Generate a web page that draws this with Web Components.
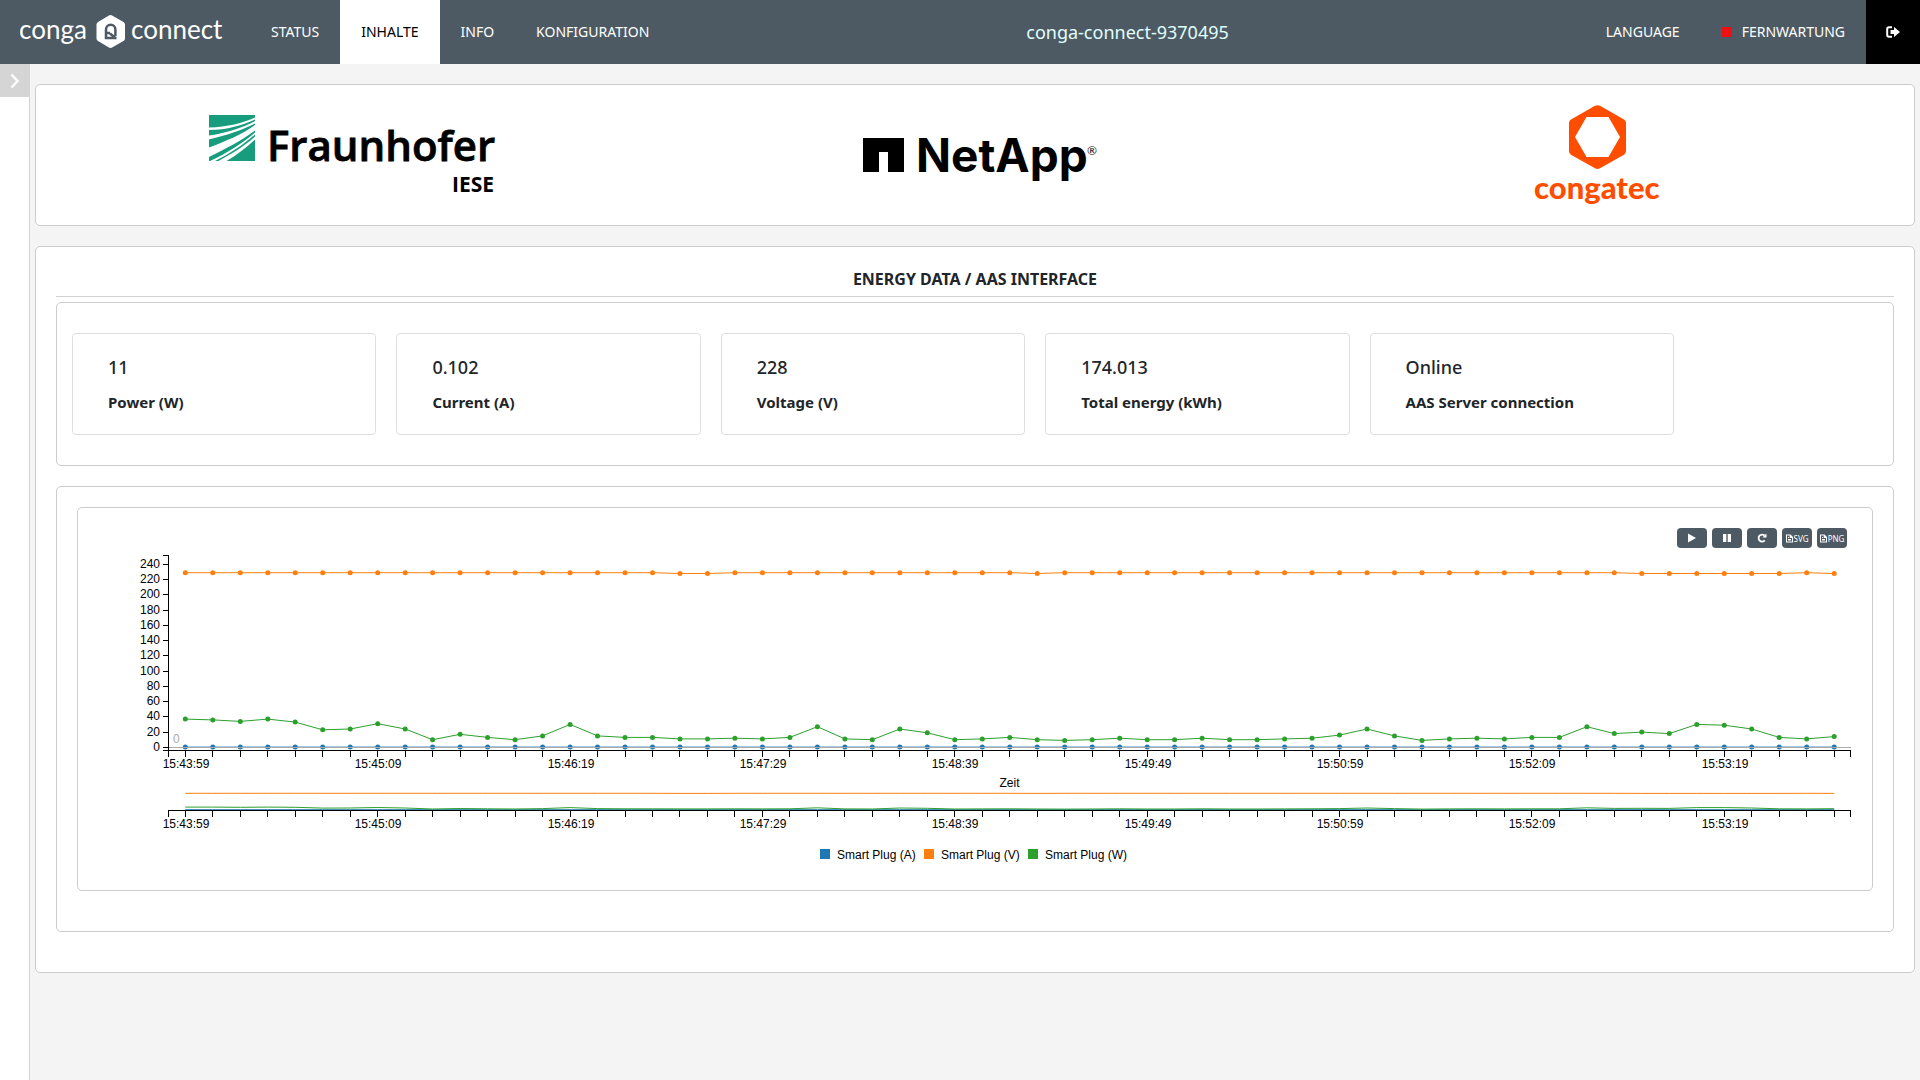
<!DOCTYPE html>
<html lang="de">
<head>
<meta charset="utf-8">
<title>conga-connect</title>
<style>
  html, body { height: 100%; }
  body { margin: 0; background: #f4f4f4; color: #212529; font-family: "Noto Sans", "Open Sans", sans-serif; font-size: 15px; }
</style>
</head>
<body>
<cc-app>
  <cc-header slot="header" device="conga-connect-9370495">
    <cc-nav-item slot="nav">STATUS</cc-nav-item>
    <cc-nav-item slot="nav" active>INHALTE</cc-nav-item>
    <cc-nav-item slot="nav">INFO</cc-nav-item>
    <cc-nav-item slot="nav">KONFIGURATION</cc-nav-item>
    <cc-nav-item slot="tools">LANGUAGE</cc-nav-item>
    <cc-nav-item slot="tools" status>FERNWARTUNG</cc-nav-item>
  </cc-header>
  <cc-sidebar slot="side"></cc-sidebar>
  <cc-panel><cc-logos></cc-logos></cc-panel>
  <cc-panel heading="ENERGY DATA / AAS INTERFACE">
    <cc-panel flush>
      <cc-stats>
        <cc-stat label="Power (W)">11</cc-stat>
        <cc-stat label="Current (A)">0.102</cc-stat>
        <cc-stat label="Voltage (V)">228</cc-stat>
        <cc-stat label="Total energy (kWh)">174.013</cc-stat>
        <cc-stat label="AAS Server connection">Online</cc-stat>
      </cc-stats>
    </cc-panel>
    <cc-panel>
      <cc-panel>
        <cc-chart-tools></cc-chart-tools>
        <cc-chart></cc-chart>
      </cc-panel>
    </cc-panel>
  </cc-panel>
</cc-app>

<script>
const define = (name, markup, Base = HTMLElement) => {
  const template = document.createElement('template');
  template.innerHTML = markup;
  customElements.define(name, class extends Base {
    constructor() {
      super();
      this.attachShadow({ mode: 'open' }).append(template.content.cloneNode(true));
    }
  });
};

define('cc-app', `
  <style>
    :host { display: flex; flex-direction: column; min-height: 100%; }
    .body { display: flex; flex: 1; }
    main { flex: 1; min-width: 0; padding: 20px 5px 0 5px; }
  </style>
  <slot name="header"></slot>
  <div class="body"><slot name="side"></slot><main><slot></slot></main></div>`);

define('cc-sidebar', `
  <style>
    :host { display: block; width: 29px; background: #fff; border-right: 1px solid #d2d2d2; }
    button { display: flex; align-items: center; justify-content: center; width: 30px; height: 33px; padding: 0; border: 0; background: #d5d5d5; }
  </style>
  <button aria-label="Menü öffnen"><svg width="12" height="16" viewBox="0 0 12 16"><path d="M2.5 1.5 L8.5 8 L2.5 14.5" fill="none" stroke="#fff" stroke-width="2.4"/></svg></button>`);

define('cc-header', `
  <style>
    :host { display: flex; height: 64px; background: #4d5a63; color: #fff; }
    .brand { box-sizing: border-box; width: 250px; padding-left: 20px; }
    .brand svg { display: block; }
    nav { display: flex; }
    .device { flex: 1; align-self: center; text-align: center; font-size: 18px; line-height: 24px; color: #e0ffff; }
    .exit { display: flex; align-items: center; justify-content: center; width: 54px; background: #000; }
  </style>
  <a class="brand" href="#" aria-label="conga connect">
    <svg width="204" height="64" fill="#fff" font-family="Lato, sans-serif" font-size="26">
      <text x="-1" y="39">conga</text>
      <path d="M90.500 15 Q91.500 15 92.500 15.800 L103.500 22 Q105 23 105 24.500 V38.500 Q105 40 103.500 41 L92.500 47.300 Q90.500 48.500 88.500 47.300 L78 41 Q76.500 40 76.500 38.500 V24.500 Q76.500 23 78 22 L88.500 15.800 Q89.500 15 90.500 15Z"/>
      <path d="M86 33 V29.500 a4.700 4.700 0 0 1 9.400 0 V36 M96.500 38 H86 V33 H90 M90 33.500 L96 38.500" fill="none" stroke="#4d5a63" stroke-width="2.500"/>
      <text x="111" y="39">connect</text>
    </svg>
  </a>
  <nav><slot name="nav"></slot></nav>
  <div class="device"><span id="device"></span></div>
  <nav><slot name="tools"></slot></nav>
  <a class="exit" href="#" aria-label="Logout"><svg width="14" height="12" viewBox="0 0 14 12"><path d="M6 1.200 H3 Q1.200 1.200 1.200 3 V9 Q1.200 10.800 3 10.800 H6" fill="none" stroke="#fff" stroke-width="2"/><path d="M4.500 4 H8 V1 L14 6 L8 11 V8 H4.500Z" fill="#fff"/></svg></a>`,
  class extends HTMLElement {
    connectedCallback() { this.shadowRoot.getElementById('device').textContent = this.getAttribute('device'); }
  });

define('cc-nav-item', `
  <style>
    :host { display: block; }
    a { display: flex; align-items: center; gap: 10px; height: 100%; padding: 0 21px; color: #fff; text-decoration: none; font-size: 14px; line-height: 20px; }
    :host([active]) a { background: #fff; color: #000; }
    i { display: none; width: 10px; height: 10px; background: #ed1010; }
    :host([status]) i { display: block; }
  </style>
  <a href="#"><i></i><slot></slot></a>`);

define('cc-panel', `
  <style>
    :host { display: block; box-sizing: border-box; margin-bottom: 20px; padding: 20px; background: #fff; border: 1px solid #ccc; border-radius: 5px; }
    :host([flush]) { padding: 30px 15px; }
    h1 { margin: 0 0 5px; padding-bottom: 5px; border-bottom: 1px solid #d2d2d2; text-align: center; font-size: 16px; font-weight: 700; line-height: 24px; }
    h1[hidden] { display: none; }
  </style>
  <h1 hidden></h1><slot></slot>`,
  class extends HTMLElement {
    connectedCallback() {
      const h = this.shadowRoot.querySelector('h1');
      h.textContent = this.getAttribute('heading') || '';
      h.hidden = !h.textContent;
    }
  });

define('cc-logos', `
  <style>
    :host { display: grid; grid-template-columns: repeat(3, 1fr); justify-items: center; margin: 0 -20px; }
    svg { display: block; overflow: visible; }
  </style>
  <svg width="290" height="100" role="img" aria-label="Fraunhofer IESE">
    <g transform="translate(5 10)">
      <path d="M0 0H46V46H0Z" fill="#179c7d"/>
      <g fill="#fff">
        <path d="M0 12.500 C18 12 34 8 46 2.500 V4.500 C34 10 18 15 0 15Z"/>
        <path d="M0 20.500 C18 18 34 12.500 46 6 V8.500 C34 15 18 20 0 24.500Z"/>
        <path d="M0 32.500 C16 26.500 34 19 46 10 V15.500 C32 26 16 34 0 42Z"/>
        <path d="M1 46 C18 38 34 28 46 17.500 V19.500 C34 30 20 39 6 46Z"/>
        <path d="M9.500 46 C22 39 36 31 46 21.500 V24.500 C38 32 28 40 17.500 46Z"/>
      </g>
    </g>
    <text x="63" y="56" font-family="Open Sans, sans-serif" font-weight="600" font-size="42" stroke="#000" stroke-width=".8">Fraunhofer</text>
    <text x="290" y="87" text-anchor="end" font-family="Open Sans, sans-serif" font-weight="700" font-size="21">IESE</text>
  </svg>
  <svg width="244" height="100" role="img" aria-label="NetApp">
    <path d="M10 33H51V67H35V47H26V67H10Z"/>
    <text x="63" y="67" font-family="Inter, sans-serif" font-weight="700" font-size="46">NetApp</text>
    <text x="234" y="50" font-family="Lato, sans-serif" font-size="12">®</text>
  </svg>
  <svg width="134" height="100" role="img" aria-label="congatec" fill="#ff4d00">
    <path fill-rule="evenodd" d="M61 .800 Q63.500 -.500 66 .800 L90 14.500 Q92 15.700 92 18 V46 Q92 48.500 90 49.700 L66 63.300 Q63.500 64.700 61 63.300 L37 49.700 Q35 48.500 35 46 V18 Q35 15.700 37 14.500Z M52.500 12 L41 32 L52.500 52 H74.500 L86 32 L74.500 12Z"/>
    <text x="0" y="94" font-family="Lato, sans-serif" font-weight="900" font-size="31">congatec</text>
  </svg>`);

define('cc-stats', `
  <style>:host { display: grid; grid-template-columns: repeat(5, 1fr); gap: 20px; margin-right: 11.3%; }</style>
  <slot></slot>`);

define('cc-stat', `
  <style>
    :host { display: block; padding: 20px 35px; border: 1px solid #dedede; border-radius: 4px; }
    p { margin: 0; font-size: 18px; line-height: 26px; font-weight: 500; }
    h2 { margin: 10px 0 0; font-size: 15px; line-height: 24px; font-weight: 700; white-space: nowrap; }
  </style>
  <p><slot></slot></p><h2></h2>`,
  class extends HTMLElement {
    connectedCallback() { this.shadowRoot.querySelector('h2').textContent = this.getAttribute('label'); }
  });

define('cc-chart-tools', `
  <style>
    :host { display: flex; justify-content: flex-end; gap: 5px; padding-right: 5px; }
    button { display: flex; align-items: center; justify-content: center; gap: 1px; width: 30px; height: 20px; padding: 0; border: 0; border-radius: 4px; background: #4d5a63; color: #fff; font: 8px "Noto Sans", sans-serif; }
    svg { display: block; flex: none; fill: #fff; }
  </style>
  <button aria-label="Start"><svg width="8" height="10"><path d="M0 .500 L8 5 L0 9.500Z"/></svg></button>
  <button aria-label="Pause"><svg width="8" height="8"><path d="M0 0H3.300V8H0Z M4.700 0H8V8H4.700Z"/></svg></button>
  <button aria-label="Neu laden"><svg width="10" height="10"><path d="M7.800 7.300 A3.500 3.500 0 1 1 7.500 2.500" fill="none" stroke="#fff" stroke-width="1.800"/><path d="M9.500 .500 V4.500 H5.500Z"/></svg></button>
  <button><svg width="7" height="9"><path fill-rule="evenodd" d="M0 .500H4.500L7 3V8.500H0Z M1 1.500V7.500H6V4H3.700V1.500Z"/><path d="M2 3H3V4H2Z M2 5H5V6.500H2Z"/></svg>SVG</button>
  <button><svg width="7" height="9"><path fill-rule="evenodd" d="M0 .500H4.500L7 3V8.500H0Z M1 1.500V7.500H6V4H3.700V1.500Z"/><path d="M2 3H3V4H2Z M2 5H5V6.500H2Z"/></svg>PNG</button>`);

const WATTS = [37,36,34,37,33,23,24,31,24,10,17,13,10,15,30,15,13,13,11,11,12,11,13,27,11,10,24,19,10,11,13,
  10,9,10,12,10,10,12,10,10,11,12,16,24,15,9,11,12,11,13,13,27,18,20,18,30,29,24,13,11,14];
const LOW_VOLTS = new Set([18, 19, 31, 53, 54, 55, 56, 57, 58, 60]);
const SERIES = [
  { name: 'Smart Plug (A)', color: '#1f77b4', values: WATTS.map(() => 0.3) },
  { name: 'Smart Plug (V)', color: '#ff7f0e', values: WATTS.map((_, i) => LOW_VOLTS.has(i) ? 228 : 229) },
  { name: 'Smart Plug (W)', color: '#2ca02c', values: WATTS },
];

define('cc-chart', `
  <style>
    :host { display: block; height: 322px; }
    svg { display: block; width: 100%; height: 100%; overflow: visible; font: 12px "Liberation Sans", Arial, sans-serif; }
    .axis { fill: none; stroke: #000; shape-rendering: crispEdges; }
    .grid { stroke: #aaa; shape-rendering: crispEdges; }
    .line { fill: none; stroke-width: 1; }
  </style>
  <svg role="img" aria-label="Smart Plug"></svg>`,
  class extends HTMLElement {
    connectedCallback() {
      this.draw();
      new ResizeObserver(() => this.draw()).observe(this);
    }
    draw() {
      const width = this.clientWidth;
      if (!width) return;
      const left = 70.5, right = width - 1.5, inset = (right - left) * 0.01;
      const step = (right - left - 2 * inset + 0.5) / (WATTS.length - 1);
      const x = i => left + inset + i * step;
      const y = v => 199.3 - v * 0.7625;
      const ySub = v => 261.7 - v * 0.0715;
      const time = i => {
        const s = 43 * 60 + 59 + i * 10;
        return '15:' + Math.floor(s / 60) + ':' + String(s % 60).padStart(2, '0');
      };
      const out = [];
      const path = (f, s) => `<path class="line" stroke="${s.color}" d="M${s.values.map((v, i) => x(i).toFixed(1) + ' ' + f(v).toFixed(1)).join('L')}"/>`;
      const xAxis = base => {
        let d = `M${left} ${base + 6}V${base}H${right}V${base + 6}`;
        WATTS.forEach((_, i) => {
          d += `M${Math.floor(x(i)) + 0.5} ${base}v6`;
          if (i % 7 === 0 && i < 60) out.push(`<text text-anchor="middle" x="${Math.floor(x(i)) + 1}" y="${base + 17.5}">${time(i)}</text>`);
        });
        out.push(`<path class="axis" d="${d}"/>`);
      };
      SERIES.forEach(s => {
        out.push(path(y, s));
        s.values.forEach((v, i) => out.push(`<circle cx="${x(i).toFixed(1)}" cy="${y(v).toFixed(1)}" r="2.5" fill="${s.color}"/>`));
        out.push(path(ySub, s));
      });
      out.push(`<path class="grid" d="M${left} 199.500H${right}"/><text x="75" y="195" fill="#aaa">0</text>`);
      let d = 'M64.500 7.500H70.500V202.500H64.500';
      for (let v = 0; v <= 240; v += 20) {
        const ty = Math.floor(y(v)) + 0.5;
        d += `M64.500 ${ty}h6`;
        out.push(`<text text-anchor="end" x="62" y="${ty + 3.5}">${v}</text>`);
      }
      out.push(`<path class="axis" d="${d}"/>`);
      xAxis(202.5);
      xAxis(262.5);
      out.push(`<text text-anchor="middle" x="${(left + right) / 2}" y="239">Zeit</text>`);
      SERIES.forEach((s, i) => {
        const lx = Math.round(width / 2) - 155 + i * 104;
        out.push(`<rect x="${lx}" y="301" width="10" height="10" fill="${s.color}"/><text x="${lx + 17}" y="311">${s.name}</text>`);
      });
      this.shadowRoot.querySelector('svg').innerHTML = out.join('');
    }
  });
</script>
</body>
</html>
